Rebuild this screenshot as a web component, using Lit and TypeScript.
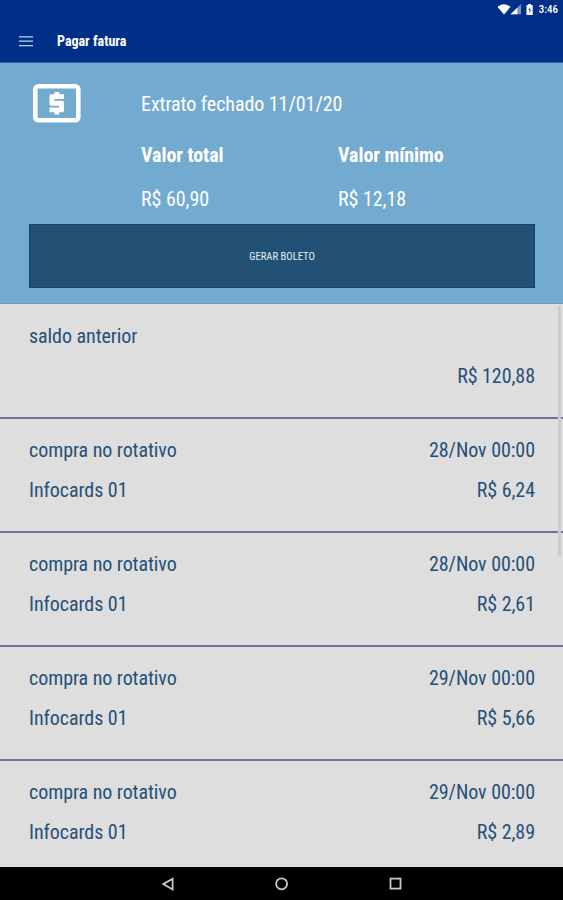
import { LitElement, html, css, svg } from "lit";
import { customElement, property } from "lit/decorators.js";

interface Entry {
  title: string;
  date: string;
  place: string;
  amount: string;
}

const entries: Entry[] = [
  { title: "saldo anterior", date: "", place: "", amount: "R$ 120,88" },
  { title: "compra no rotativo", date: "28/Nov 00:00", place: "Infocards 01", amount: "R$ 6,24" },
  { title: "compra no rotativo", date: "28/Nov 00:00", place: "Infocards 01", amount: "R$ 2,61" },
  { title: "compra no rotativo", date: "29/Nov 00:00", place: "Infocards 01", amount: "R$ 5,66" },
  { title: "compra no rotativo", date: "29/Nov 00:00", place: "Infocards 01", amount: "R$ 2,89" },
];

@customElement("statement-row")
class StatementRow extends LitElement {
  @property({ attribute: false }) entry!: Entry;

  static styles = css`
    :host {
      display: grid;
      grid-template-columns: 1fr auto;
      grid-template-rows: 40px 39px;
      align-items: center;
      box-sizing: border-box;
      height: 114px;
      flex: none;
      padding: 11px 28px 22px 29px;
      border-bottom: 2px solid #73719a;
      color: #265078;
      white-space: nowrap;
    }
    .right {
      text-align: right;
    }
  `;

  render() {
    return html`
      <span>${this.entry.title}</span><span class="right">${this.entry.date}</span>
      <span>${this.entry.place}</span><span class="right">${this.entry.amount}</span>
    `;
  }
}

@customElement("app-root")
class AppRoot extends LitElement {
  static styles = css`
    :host {
      display: flex;
      flex-direction: column;
      width: 563px;
      height: 900px;
      overflow: hidden;
      background: #dedede;
      font-family: "Roboto Condensed", Roboto, sans-serif;
      font-stretch: 75%;
      font-size: 20px;
      line-height: 24px;
      letter-spacing: -0.06px;
    }
    svg {
      display: block;
    }
    .status {
      display: flex;
      justify-content: flex-end;
      align-items: center;
      height: 20px;
      padding-right: 5px;
      background: #002f87;
      color: #fff;
      font-size: 11px;
      font-weight: 500;
      font-stretch: 100%;
      letter-spacing: 0;
      line-height: 20px;
    }
    .toolbar {
      display: flex;
      align-items: center;
      box-sizing: border-box;
      height: 43px;
      padding-left: 19px;
      gap: 24px;
      border-bottom: 1px solid #3560a3;
      background: #002f87;
      color: #fff;
      font-size: 14px;
      font-weight: 700;
      letter-spacing: 0;
    }
    .summary {
      box-sizing: border-box;
      height: 241px;
      flex: none;
      padding: 20px 28px 0 29px;
      background: #73abd0;
      border-bottom: 1px solid #689fc8;
      color: #fff;
    }
    .details {
      display: grid;
      grid-template-columns: 112px 197px 1fr;
      grid-template-rows: 42px 59px 40px;
      white-space: nowrap;
    }
    .closing {
      grid-column: 2 / 4;
      padding-top: 9px;
    }
    .label {
      padding-top: 18px;
      font-weight: 700;
    }
    .label.first,
    .value.first {
      grid-column: 2;
    }
    .value {
      padding-top: 3px;
    }
    .boleto {
      display: block;
      box-sizing: border-box;
      width: 100%;
      height: 64px;
      padding: 1px 0 0;
      border: 1px solid #144468;
      border-radius: 0;
      background: #225175;
      color: #e4edf4;
      font: inherit;
      font-size: 10.6px;
      letter-spacing: 0;
    }
    .list {
      position: relative;
      display: flex;
      flex-direction: column;
      flex: 1;
      min-height: 0;
      padding-top: 1px;
      overflow: hidden;
    }
    .thumb {
      position: absolute;
      top: 2px;
      right: 2px;
      width: 3px;
      height: 250px;
      background: #cccccc;
    }
    .nav {
      display: flex;
      justify-content: center;
      align-items: center;
      gap: 98px;
      height: 33px;
      flex: none;
      background: #000;
    }
  `;

  render() {
    return html`
      <div class="status">
        <svg width="41" height="20" viewBox="0 0 41 20">
          ${svg`
            <path d="M-.5 6.8Q6 1.9 12.5 6.8L6 14.4z" fill="#fff"/>
            <path d="M23 4v10.3H12.7z" fill="#7596c6"/>
            <path d="M19.3 7.7v6.6h-6.6z" fill="#fff"/>
            <path d="M28.5 5h1.7V4h2.8v1h1.7v10h-6.2z" fill="#fff"/>
            <path d="M32.1 7l-2 3.1h1.3V13l2-3.3h-1.3z" fill="#31589e"/>
          `}
        </svg>
        <span>3:46</span>
      </div>
      <header class="toolbar">
        <svg width="14" height="11" viewBox="0 0 14 11">
          <path d="M0 .8h14M0 5.2h14M0 9.6h14" stroke="#bfd0ec" stroke-width="1.3" />
        </svg>
        <span>Pagar fatura</span>
      </header>
      <section class="summary">
        <div class="details">
          <svg width="56" height="42" viewBox="0 0 56 42">
            <rect x="6.3" y="3.3" width="43" height="34" rx="3" fill="none" stroke="#fff" stroke-width="4.6" />
            <path
              d="M25.5 9h4.7v2.3H35v4.7H25.4v1.7h7.8q1.8 0 1.8 1.8v8q0 1.8-1.8 1.8h-3v2.3h-4.7v-2.3h-5v-4.7H30v-1.9h-7.7q-1.8 0-1.8-1.8v-7.8q0-1.8 1.8-1.8h3.2z"
              fill="#fff"
            />
          </svg>
          <span class="closing">Extrato fechado 11/01/20</span>
          <span class="label first">Valor total</span><span class="label">Valor mínimo</span>
          <span class="value first">R$ 60,90</span><span class="value">R$ 12,18</span>
        </div>
        <button class="boleto">GERAR BOLETO</button>
      </section>
      <main class="list">
        ${entries.map((e) => html`<statement-row .entry=${e}></statement-row>`)}
        <div class="thumb"></div>
      </main>
      <nav class="nav">
        <svg width="16" height="16" viewBox="0 0 16 16">
          <path d="M12.6 2.7v10.8L3.2 8.1z" fill="none" stroke="#c8c8c8" stroke-width="1.8" />
        </svg>
        <svg width="16" height="16" viewBox="0 0 16 16">
          <circle cx="7.6" cy="7.8" r="5.5" fill="none" stroke="#c8c8c8" stroke-width="1.8" />
        </svg>
        <svg width="16" height="16" viewBox="0 0 16 16">
          <rect x="2.5" y="2.6" width="10" height="10" fill="none" stroke="#c8c8c8" stroke-width="1.8" />
        </svg>
      </nav>
    `;
  }
}
